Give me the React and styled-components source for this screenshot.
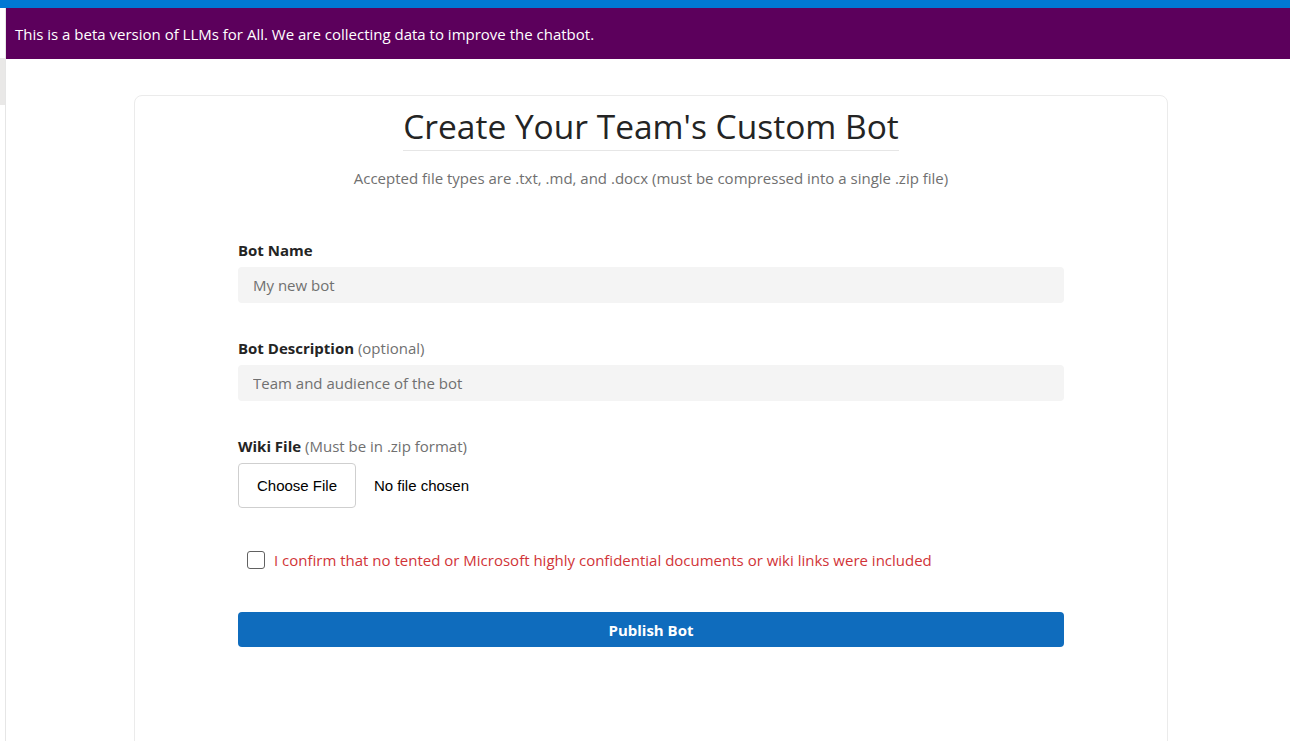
import React from 'react';
import styled, { createGlobalStyle } from 'styled-components';

const GlobalStyle = createGlobalStyle`
    body {
        margin: 0;
        background: #ffffff;
        font-family: 'Open Sans', 'Noto Sans', sans-serif;
        color: #242424;
    }
`;

const Page = styled.div`
    display: flex;
    flex-direction: column;
    height: 741px;
    overflow: hidden;
`;

const TopStrip = styled.div`
    height: 8px;
    background: #0078d4;
    flex-shrink: 0;
`;

const Shell = styled.div`
    display: flex;
    flex: 1;
`;

const SideRail = styled.div`
    width: 5px;
    border-right: 1px solid #e6e6e6;
    flex-shrink: 0;
`;

const RailTab = styled.div`
    height: 47px;
    margin-top: 50px;
    background: #e9e8e7;
`;

const Main = styled.div`
    flex: 1;
    display: flex;
    flex-direction: column;
`;

const Banner = styled.div`
    height: 51px;
    display: flex;
    align-items: center;
    padding: 0 9px;
    background: #5c005c;
    color: #ffffff;
    font-size: 15px;
`;

const Card = styled.div`
    margin: 36px 0 0 128px;
    width: 1032px;
    min-height: 700px;
    border: 1px solid #ebebeb;
    border-radius: 8px;
    display: flex;
    flex-direction: column;
    align-items: center;
`;

const Title = styled.h1`
    margin: 8px 0 0;
    padding-bottom: 2px;
    font-size: 33.5px;
    font-weight: 400;
    line-height: 44px;
    color: #242424;
    border-bottom: 1px solid #e6e6e6;
`;

const Subtitle = styled.p`
    margin: 17px 0 0;
    font-size: 15px;
    line-height: 20px;
    color: #707070;
`;

const Form = styled.form`
    align-self: stretch;
    margin: 52px 103px 0;
    display: flex;
    flex-direction: column;
`;

const Field = styled.div`
    display: flex;
    flex-direction: column;
    gap: 7px;
    margin-bottom: ${props => props.$gap || 35}px;
`;

const Label = styled.label`
    font-size: 15px;
    line-height: 20px;
    font-weight: 700;
    color: #242424;
`;

const Hint = styled.span`
    font-weight: 400;
    color: #707070;
`;

const TextInput = styled.input`
    height: 36px;
    box-sizing: border-box;
    border: none;
    border-radius: 4px;
    background: #f4f4f4;
    padding: 0 15px;
    font-family: inherit;
    font-size: 15px;
    color: #242424;
    outline: none;

    &::placeholder {
        color: #707070;
    }
`;

const FileRow = styled.div`
    display: flex;
    align-items: center;
    gap: 18px;
    font-family: 'Liberation Sans', Arial, sans-serif;
    font-size: 15px;
    color: #000000;
`;

const FileButton = styled.label`
    width: 118px;
    height: 45px;
    box-sizing: border-box;
    display: flex;
    align-items: center;
    justify-content: center;
    border: 1px solid #cfcfcf;
    border-radius: 4px;
    background: #ffffff;
    cursor: pointer;

    input {
        display: none;
    }
`;

const ConfirmRow = styled.label`
    display: flex;
    align-items: center;
    gap: 9px;
    margin: 0 0 42px 9px;
    font-size: 15px;
    color: #d13438;
    cursor: pointer;
`;

const CheckBox = styled.input`
    appearance: none;
    margin: 0;
    width: 18px;
    height: 18px;
    border: 1px solid #616161;
    border-radius: 3px;
    background: #ffffff;
`;

const PublishButton = styled.button`
    height: 35px;
    border: none;
    border-radius: 4px;
    background: #0f6cbd;
    color: #ffffff;
    font-family: inherit;
    font-size: 15px;
    font-weight: 700;
    cursor: pointer;
`;

export default function App() {
    return (
        <Page>
            <GlobalStyle />
            <TopStrip />
            <Shell>
                <SideRail>
                    <RailTab />
                </SideRail>
                <Main>
                    <Banner>This is a beta version of LLMs for All. We are collecting data to improve the chatbot.</Banner>
                    <Card>
                        <Title>Create Your Team's Custom Bot</Title>
                        <Subtitle>Accepted file types are .txt, .md, and .docx (must be compressed into a single .zip file)</Subtitle>
                        <Form onSubmit={e => e.preventDefault()}>
                            <Field>
                                <Label htmlFor="botName">Bot Name</Label>
                                <TextInput id="botName" placeholder="My new bot" />
                            </Field>
                            <Field>
                                <Label htmlFor="botDesc">
                                    Bot Description <Hint>(optional)</Hint>
                                </Label>
                                <TextInput id="botDesc" placeholder="Team and audience of the bot" />
                            </Field>
                            <Field $gap={42}>
                                <Label>
                                    Wiki File <Hint>(Must be in .zip format)</Hint>
                                </Label>
                                <FileRow>
                                    <FileButton>
                                        Choose File
                                        <input type="file" accept=".zip" />
                                    </FileButton>
                                    <span>No file chosen</span>
                                </FileRow>
                            </Field>
                            <ConfirmRow>
                                <CheckBox type="checkbox" />
                                I confirm that no tented or Microsoft highly confidential documents or wiki links were included
                            </ConfirmRow>
                            <PublishButton type="submit">Publish Bot</PublishButton>
                        </Form>
                    </Card>
                </Main>
            </Shell>
        </Page>
    );
}
